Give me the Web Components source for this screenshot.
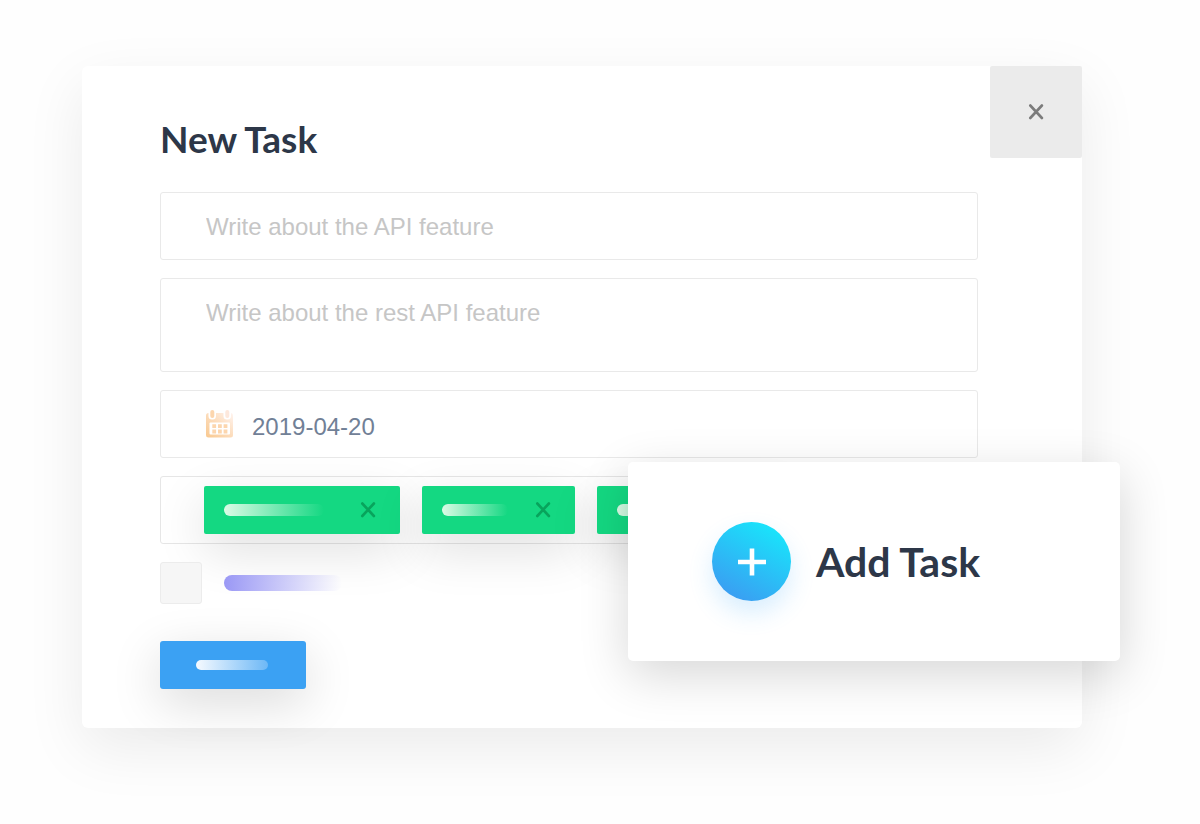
<!DOCTYPE html>
<html lang="en">
<head>
<meta charset="utf-8">
<meta name="viewport" content="width=device-width, initial-scale=1">
<title>New Task</title>
<style>
    body {
        margin: 0;
        background-color: #fefefe;
        font-family: "Liberation Sans", Arial, sans-serif;
        color: #2d3748;
    }
</style>
</head>
<body>
<task-page></task-page>

<script>
class LoadingBar extends HTMLElement {

    constructor() {
        super();
        this.shadow = this.attachShadow({mode: 'open'});
        this.render();
    }

    render() {
        this.shadow.innerHTML =
        `
        <style>
        :host {
            display: block;
            flex: none;
            border-radius: 8px;
            width: var(--bar-width, 100px);
            height: var(--bar-height, 12px);
            background: linear-gradient(90deg, var(--bar-from, #dcfbe6), var(--bar-to, rgba(20, 220, 130, 0)));
        }
        </style>
        `;
    }
}

customElements.define('loading-bar', LoadingBar);

class CrossIcon extends HTMLElement {

    constructor() {
        super();
        this.shadow = this.attachShadow({mode: 'open'});
        this.render();
    }

    render() {
        this.shadow.innerHTML =
        `
        <style>
        :host {
            display: block;
            width: 16px;
            height: 16px;
        }
        svg {
            display: block;
        }
        </style>
        <svg width="16" height="16" viewBox="0 0 16 16" fill="none" stroke="currentColor" stroke-width="2.6" stroke-linecap="round" aria-hidden="true">
            <path d="M2.3 1.5 13.9 14M13.9 1.5 2.3 14"/>
        </svg>
        `;
    }
}

customElements.define('cross-icon', CrossIcon);

class TaskTag extends HTMLElement {

    constructor() {
        super();
        this.shadow = this.attachShadow({mode: 'open'});
        this.render();
    }

    render() {
        this.shadow.innerHTML =
        `
        <style>
        :host {
            display: flex;
            flex: none;
            align-items: center;
            gap: var(--tag-gap, 36px);
            box-sizing: border-box;
            height: 48px;
            padding: 0 24px 0 20px;
            border-radius: 2px;
            background-color: #14d882;
            box-shadow: 0 16px 50px rgba(0, 0, 0, 0.13);
        }
        button {
            border: 0;
            padding: 0;
            background: none;
            color: #08a45c;
            cursor: pointer;
        }
        </style>
        <loading-bar></loading-bar>
        <button type="button" aria-label="Remove tag"><cross-icon></cross-icon></button>
        `;
    }
}

customElements.define('task-tag', TaskTag);

class TaskField extends HTMLElement {

    constructor() {
        super();
        this.shadow = this.attachShadow({mode: 'open'});
        this.render();
    }

    render() {
        const type = this.getAttribute('type');
        const label = this.getAttribute('label');
        const placeholder = this.getAttribute('placeholder') || '';
        const value = this.getAttribute('value') || '';

        this.shadow.innerHTML =
        `
        <style>
        :host {
            display: block;
        }
        .field {
            display: flex;
            align-items: center;
            gap: 18px;
            box-sizing: border-box;
            min-height: 68px;
            padding: 0 45px;
            border: 1px solid #e9e9e9;
            border-radius: 3px;
        }
        .field.textarea {
            align-items: flex-start;
            min-height: 94px;
            padding-top: 19px;
        }
        input, textarea {
            flex: 1;
            min-width: 0;
            border: 0;
            padding: 0;
            outline: 0;
            resize: none;
            background: none;
            font: inherit;
            font-size: 24px;
            line-height: 30px;
            color: #718096;
        }
        input {
            padding-top: 2px;
        }
        .date input {
            padding-top: 6px;
        }
        textarea {
            height: 60px;
            overflow: hidden;
        }
        ::placeholder {
            color: #c6c6c6;
            opacity: 1;
        }
        </style>
        <div class="field ${type}">
            <slot name="icon"></slot>
            ${type === 'textarea' ?
            `<textarea aria-label="${label}" placeholder="${placeholder}"></textarea>`
            :
            `<input type="text" aria-label="${label}" placeholder="${placeholder}" value="${value}">`
            }
        </div>
        `;
    }
}

customElements.define('task-field', TaskField);

class CalendarIcon extends HTMLElement {

    constructor() {
        super();
        this.shadow = this.attachShadow({mode: 'open'});
        this.render();
    }

    render() {
        this.shadow.innerHTML =
        `
        <style>
        :host {
            display: block;
            flex: none;
        }
        svg {
            display: block;
        }
        </style>
        <svg width="28" height="28" viewBox="0 0 28 28" aria-hidden="true">
            <defs>
                <linearGradient id="calendar" x1="0" y1="1" x2="1" y2="0">
                    <stop offset="0" stop-color="#f9c88e"/>
                    <stop offset="0.5" stop-color="#fcdcbb"/>
                    <stop offset="1" stop-color="#fff4f0"/>
                </linearGradient>
                <mask id="cutout">
                    <rect width="28" height="28" fill="#fff"/>
                    <rect x="2.5" y="-2" width="7.5" height="11.5" rx="3.5"/>
                    <rect x="17.5" y="-2" width="7.5" height="11.5" rx="3.5"/>
                    <rect x="3.5" y="12.5" width="20.5" height="12" rx="1"/>
                </mask>
            </defs>
            <rect y="3" width="27" height="24.5" rx="2.5" fill="url(#calendar)" mask="url(#cutout)"/>
            <g fill="#fcd6ae">
                <rect x="4.3" y="0" width="4" height="8" rx="2"/>
                <rect x="19.3" y="0" width="4" height="8" rx="2" fill="#fde8dc"/>
                <path d="M6.3 14.3h3.8v3.8H6.3zM12 14.3h3.8v3.8H12zM17.6 14.3h3.8v3.8h-3.8zM6.3 19.6h3.8v3.8H6.3zM12 19.6h3.8v3.8H12zM17.6 19.6h3.8v3.8h-3.8z"/>
            </g>
        </svg>
        `;
    }
}

customElements.define('calendar-icon', CalendarIcon);

class AddTask extends HTMLElement {

    constructor() {
        super();
        this.shadow = this.attachShadow({mode: 'open'});
        this.render();
    }

    render() {
        this.shadow.innerHTML =
        `
        <style>
        :host {
            display: block;
            border-radius: 5px;
            background-color: #fff;
            box-shadow: 0 14px 50px rgba(0, 0, 0, 0.16);
        }
        button {
            display: flex;
            align-items: center;
            gap: 25px;
            width: 100%;
            padding: 60px 84px;
            border: 0;
            background: none;
            font-family: Lato, sans-serif;
            font-size: 41px;
            font-weight: 700;
            line-height: 50px;
            color: inherit;
            white-space: nowrap;
            cursor: pointer;
        }
        .plus {
            display: grid;
            place-items: center;
            flex: none;
            width: 79px;
            height: 79px;
            border-radius: 50%;
            background: linear-gradient(30deg, #3b9cf2 10%, #18e6fb 90%);
            box-shadow: 0 12px 24px rgba(60, 170, 250, 0.2);
        }
        svg {
            display: block;
        }
        </style>
        <button type="button">
            <span class="plus">
                <svg width="30" height="30" viewBox="0 0 30 30" stroke="#fff" stroke-width="4.6" aria-hidden="true">
                    <path d="M15 1.5v27M1 15h28"/>
                </svg>
            </span>
            <slot></slot>
        </button>
        `;
    }
}

customElements.define('add-task', AddTask);

class TaskDialog extends HTMLElement {

    constructor() {
        super();
        this.shadow = this.attachShadow({mode: 'open'});
        this.render();
    }

    render() {
        this.shadow.innerHTML =
        `
        <style>
        * {
            box-sizing: border-box;
        }
        :host {
            display: block;
            position: relative;
            border-radius: 6px;
            background-color: #fff;
            box-shadow: 0 20px 60px rgba(0, 0, 0, 0.08);
        }
        .close-button {
            position: absolute;
            top: 0;
            right: 0;
            display: grid;
            place-items: center;
            width: 92px;
            height: 92px;
            border: 0;
            border-radius: 2px;
            background-color: #ebebeb;
            color: #7b7b7b;
            cursor: pointer;
        }
        form {
            display: flex;
            flex-direction: column;
            gap: 18px;
            padding: 48px 104px 39px 78px;
        }
        h1 {
            margin: 0 0 10px;
            font-family: Lato, sans-serif;
            font-size: 37px;
            font-weight: 700;
            line-height: 50px;
        }
        .tags {
            display: flex;
            gap: 22px;
            height: 68px;
            padding: 9px 43px;
            border: 1px solid #e6e6e6;
            border-radius: 3px;
        }
        .short {
            --bar-width: 66px;
            --tag-gap: 27px;
        }
        .option {
            display: flex;
            align-items: center;
            gap: 22px;
            --bar-width: 118px;
            --bar-height: 16px;
            --bar-from: #9a98f5;
            --bar-to: rgba(240, 240, 255, 0);
        }
        input {
            appearance: none;
            width: 42px;
            height: 42px;
            margin: 0;
            border: 1px solid #ececec;
            border-radius: 3px;
            background-color: #f6f6f6;
        }
        input:checked {
            background-color: #9a98f5;
        }
        .submit {
            align-self: flex-start;
            height: 48px;
            margin-top: 19px;
            padding: 0 38px 0 36px;
            border: 0;
            border-radius: 3px;
            background-color: #3ba1f3;
            box-shadow: 0 14px 50px rgba(0, 0, 0, 0.15);
            cursor: pointer;
            --bar-width: 72px;
            --bar-height: 10px;
            --bar-from: #f6faff;
            --bar-to: #6db8f6;
        }
        .overlay {
            position: absolute;
            right: -38px;
            bottom: 67px;
            width: 492px;
        }
        </style>
        <button class="close-button" type="button" aria-label="Close"><cross-icon></cross-icon></button>
        <form>
            <h1>New Task</h1>
            <task-field type="input" label="Title" placeholder="Write about the API feature"></task-field>
            <task-field type="textarea" label="Description" placeholder="Write about the rest API feature"></task-field>
            <task-field type="date" label="Date" value="2019-04-20">
                <calendar-icon slot="icon"></calendar-icon>
            </task-field>
            <div class="tags">
                <task-tag></task-tag>
                <task-tag class="short"></task-tag>
                <task-tag></task-tag>
            </div>
            <label class="option">
                <input type="checkbox" aria-label="Option">
                <loading-bar></loading-bar>
            </label>
            <button class="submit" type="button" aria-label="Save"><loading-bar></loading-bar></button>
        </form>
        <add-task class="overlay">Add Task</add-task>
        `;
    }
}

customElements.define('task-dialog', TaskDialog);

class TaskPage extends HTMLElement {

    constructor() {
        super();
        this.shadow = this.attachShadow({mode: 'open'});
        this.render();
    }

    render() {
        this.shadow.innerHTML =
        `
        <style>
        :host {
            display: block;
            padding: 66px 118px 96px 82px;
        }
        </style>
        <task-dialog></task-dialog>
        `;
    }
}

customElements.define('task-page', TaskPage);
</script>
</body>
</html>
